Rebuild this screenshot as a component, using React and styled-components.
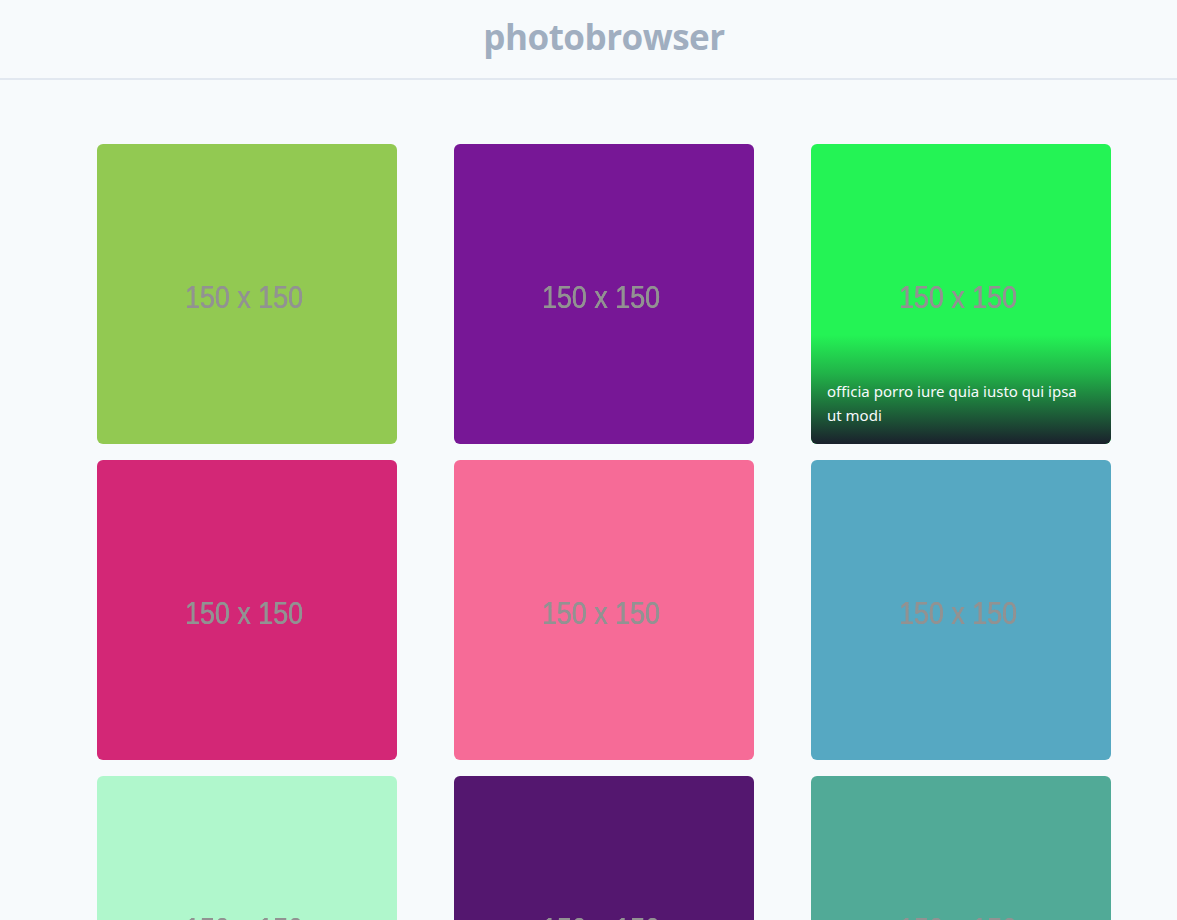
import React from "react";
import styled, { createGlobalStyle } from "styled-components";

const GlobalStyle = createGlobalStyle`
  html, body { margin: 0; padding: 0; background: #f7fafc; }
  body { font-family: "Ubuntu", "Open Sans", "Noto Sans", sans-serif; overflow: hidden; }
`;

const Page = styled.div`
  height: 920px;
  overflow: hidden;
  background: #f7fafc;
`;

const Header = styled.header`
  height: 78px;
  border-bottom: 2px solid #e2e8f0;
  display: flex;
  align-items: center;
  justify-content: center;
  padding-left: 31px;
`;

const Title = styled.h1`
  margin: 0;
  font-family: "Open Sans", "Noto Sans", sans-serif;
  font-weight: 700;
  font-size: 35px;
  letter-spacing: -0.5px;
  color: #a0aec0;
  line-height: 1;
  padding-bottom: 6px;
`;

const Grid = styled.main`
  display: grid;
  grid-template-columns: repeat(3, 300px);
  column-gap: 57px;
  row-gap: 16px;
  padding: 64px 0 0 97px;
`;

const Tile = styled.figure`
  position: relative;
  margin: 0;
  width: 300px;
  height: 300px;
  border-radius: 6px;
  overflow: hidden;
  background: ${(p) => p.$color};
  display: flex;
  align-items: center;
  justify-content: center;
`;

const Placeholder = styled.span`
  font-family: "Liberation Sans", Arial, sans-serif;
  font-size: 32px;
  color: #929292;
  transform: scaleX(0.84) translate(-4px, 3px);
  filter: blur(0.7px);
  text-shadow: 0 0 0.6px #929292, 0.4px 0 0 #929292;
  white-space: nowrap;
`;

const Caption = styled.figcaption`
  position: absolute;
  left: 0;
  right: 0;
  bottom: 0;
  padding: 44px 16px 17px;
  background: linear-gradient(to bottom, rgba(26, 32, 44, 0) 0%, rgba(26, 32, 44, 0.3) 35%, rgba(26, 32, 44, 1) 100%);
  color: #f7fafc;
  font-family: "Noto Sans", "Open Sans", sans-serif;
  font-size: 15px;
  line-height: 24px;
`;

const photos = [
  { color: "#92c952" },
  { color: "#771796" },
  { color: "#24f355", caption: "officia porro iure quia iusto qui ipsa ut modi" },
  { color: "#d32776" },
  { color: "#f66b97" },
  { color: "#56a8c2" },
  { color: "#b0f7cc" },
  { color: "#54176f" },
  { color: "#51aa97" },
];

export default function App() {
  return (
    <Page>
      <GlobalStyle />
      <Header>
        <Title>photobrowser</Title>
      </Header>
      <Grid>
        {photos.map((p, i) => (
          <Tile key={i} $color={p.color}>
            <Placeholder>150 x 150</Placeholder>
            {p.caption && <Caption>{p.caption}</Caption>}
          </Tile>
        ))}
      </Grid>
    </Page>
  );
}
